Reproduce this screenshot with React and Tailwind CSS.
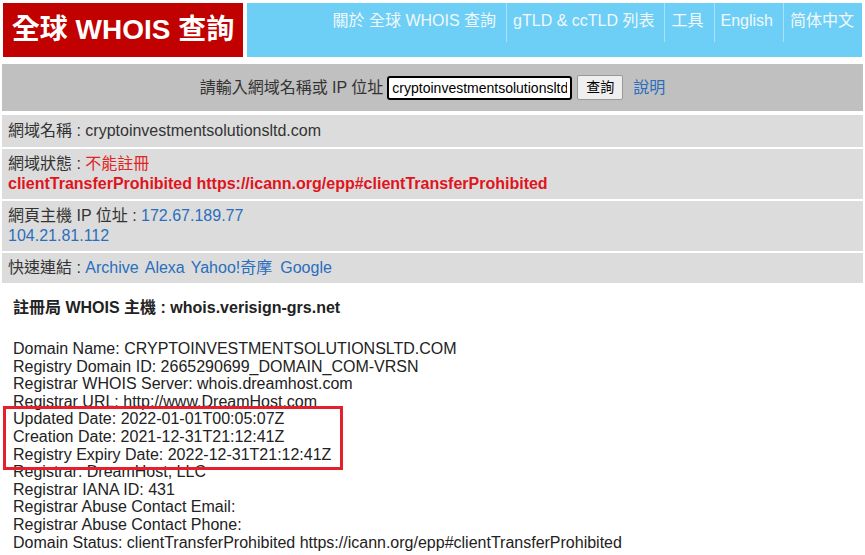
import React from 'react';

const navItems = ['關於 全球 WHOIS 查詢', 'gTLD & ccTLD 列表', '工具', 'English', '简体中文'];

const whoisLines = [
  'Domain Name: CRYPTOINVESTMENTSOLUTIONSLTD.COM',
  'Registry Domain ID: 2665290699_DOMAIN_COM-VRSN',
  'Registrar WHOIS Server: whois.dreamhost.com',
  'Registrar URL: http://www.DreamHost.com',
  'Updated Date: 2022-01-01T00:05:07Z',
  'Creation Date: 2021-12-31T21:12:41Z',
  'Registry Expiry Date: 2022-12-31T21:12:41Z',
  'Registrar: DreamHost, LLC',
  'Registrar IANA ID: 431',
  'Registrar Abuse Contact Email:',
  'Registrar Abuse Contact Phone:',
  'Domain Status: clientTransferProhibited https://icann.org/epp#clientTransferProhibited',
];

const font = "font-['Liberation_Sans','Noto_Sans_CJK_TC',sans-serif]";

const App = () => {
  return (
    <div className={`relative w-[865px] h-[555px] overflow-hidden bg-white text-[#333] ${font}`}>
      {/* Header */}
      <div className="flex gap-1 px-[3px] pt-[3px]">
        <div className="w-[240px] h-[54px] bg-[#c10000] flex items-center justify-center">
          <span className="text-white font-bold text-[28px]">全球 WHOIS 查詢</span>
        </div>
        <div className="flex-1 h-[54px] bg-[#6dcff6] flex justify-end">
          {navItems.map((item, i) => (
            <div
              key={item}
              className={`h-[39px] pt-[8px] pl-[6px] text-[16px] leading-[20px] text-[#f2f8fb] ${i > 0 ? 'border-l border-[#a8e2f8]' : ''} ${i === navItems.length - 1 ? 'pr-[8px]' : 'pr-[10px]'}`}
            >
              {item}
            </div>
          ))}
        </div>
      </div>

      {/* Search bar */}
      <div className="mx-[2px] mt-[7px] h-[47px] bg-[#c0c0c0] flex items-center justify-center text-[16px]">
        <span className="mr-[4px] text-[#333]">請輸入網域名稱或 IP 位址</span>
        <div className="w-[185px] h-[24px] bg-white border-2 border-black rounded-[3px] px-[3px] flex items-center">
          <span className="block w-full overflow-hidden text-[14px] leading-[18px] text-black whitespace-nowrap">cryptoinvestmentsolutionsltd.com</span>
        </div>
        <button className="ml-[5px] h-[25px] px-[8px] bg-[#efefef] border border-[#999] rounded-[2px] text-[14px] text-black">
          查詢
        </button>
        <a className="ml-[10px] text-[#2a6ebd]">說明</a>
      </div>

      {/* Info rows */}
      <div className="mx-[2px] mt-[4px] flex flex-col gap-[2px] text-[16px] leading-[20px]">
        <div className="bg-[#dcdcdc] px-[6px] py-[6px]">
          網域名稱 : cryptoinvestmentsolutionsltd.com
        </div>
        <div className="bg-[#dcdcdc] px-[6px] py-[5px]">
          <div>
            網域狀態 : <span className="text-[#e02424]">不能註冊</span>
          </div>
          <div className="text-[#e0141c] font-bold">
            clientTransferProhibited https://icann.org/epp#clientTransferProhibited
          </div>
        </div>
        <div className="bg-[#dcdcdc] px-[6px] py-[5px]">
          <div>
            網頁主機 IP 位址 : <a className="text-[#2a6ebd]">172.67.189.77</a>
          </div>
          <a className="text-[#2a6ebd]">104.21.81.112</a>
        </div>
        <div className="bg-[#dcdcdc] px-[6px] py-[5px]">
          快速連結 : <a className="text-[#2a6ebd]">Archive</a>
          <a className="ml-[6px] text-[#2a6ebd]">Alexa</a>
          <a className="ml-[6px] text-[#2a6ebd]">Yahoo!奇摩</a>
          <a className="ml-[8px] text-[#2a6ebd]">Google</a>
        </div>
      </div>

      {/* WHOIS record */}
      <div className="px-[13px] pt-[15px] text-[#222]">
        <div className="font-bold text-[16px] leading-[20px]">註冊局 WHOIS 主機 : whois.verisign-grs.net</div>
        <div className="mt-[22px] text-[16px] leading-[17.6px]">
          {whoisLines.map((line) => (
            <div key={line} className="whitespace-nowrap">{line}</div>
          ))}
        </div>
      </div>

      {/* Highlight annotation */}
      <div className="absolute left-[3px] top-[406px] w-[340px] h-[64px] border-[3px] border-[#e4202c]" />
    </div>
  );
};

export default App;
